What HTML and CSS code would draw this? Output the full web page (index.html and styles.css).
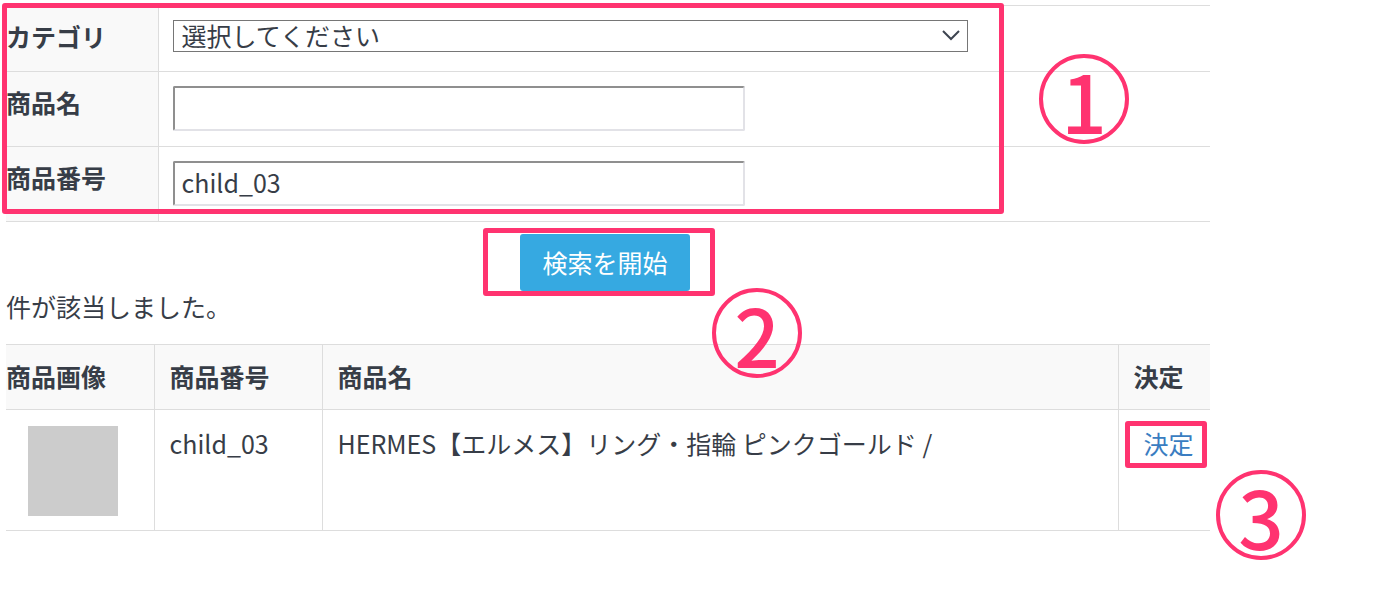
FILE: index.html
```html
<!DOCTYPE html>
<html lang="ja">

<head>
    <meta charset="UTF-8">
    <meta name="viewport" content="width=device-width, initial-scale=1.0">
    <title>商品検索</title>
    <link rel="stylesheet" href="styles.css">
</head>

<body>
    <div class="page">
        <!-- search form -->
        <table class="search-table">
            <colgroup>
                <col class="col-label">
                <col>
            </colgroup>
            <tr>
                <th>カテゴリ</th>
                <td>
                    <div class="select-wrap">
                        <select class="select">
                            <option>選択してください</option>
                        </select>
                        <svg class="select-arrow" width="18" height="11" viewBox="0 0 18 11">
                            <path d="M1 1 L9 9 L17 1" fill="none" stroke="#3d4450" stroke-width="2" />
                        </svg>
                    </div>
                </td>
            </tr>
            <tr>
                <th>商品名</th>
                <td><input class="text-input" type="text" value=""></td>
            </tr>
            <tr>
                <th>商品番号</th>
                <td><input class="text-input" type="text" value="child_03"></td>
            </tr>
        </table>

        <div class="btn-row">
            <button class="search-btn">検索を開始</button>
        </div>

        <p class="result-count">件が該当しました。</p>

        <!-- results -->
        <table class="result-table">
            <colgroup>
                <col class="col-img">
                <col class="col-code">
                <col>
                <col class="col-select">
            </colgroup>
            <tr>
                <th>商品画像</th>
                <th>商品番号</th>
                <th>商品名</th>
                <th>決定</th>
            </tr>
            <tr>
                <td class="img-cell"><div class="thumb"></div></td>
                <td>child_03</td>
                <td>HERMES【エルメス】リング・指輪 ピンクゴールド /</td>
                <td><a class="pick-link" href="#">決定</a></td>
            </tr>
        </table>

        <!-- annotations -->
        <div class="mark-box box-form"></div>
        <div class="mark-box box-btn"></div>
        <div class="mark-box box-link"></div>
        <div class="mark-num num-1">1</div>
        <div class="mark-num num-2">2</div>
        <div class="mark-num num-3">3</div>
    </div>
</body>

</html>
```

FILE: styles.css
```css
/* Basic body styling */
html,
body {
    min-height: 616px;
}

body {
    margin: 0;
    background-color: #fff;
    color: #373d47;
    font-family: "Noto Sans CJK JP", "Noto Sans", sans-serif;
    font-size: 25px;
}

.page {
    position: relative;
    width: 1204px;
    min-height: 611px;
    padding: 5px 0 0 6px;
}

table {
    width: 100%;
    border-collapse: collapse;
    table-layout: fixed;
}

/* Search form table */
.search-table .col-label {
    width: 152px;
}

.search-table th,
.search-table td {
    border-top: 1px solid #ddd;
    border-bottom: 1px solid #ddd;
    padding: 14px 14px 15px;
    vertical-align: top;
    line-height: 36px;
    text-align: left;
}

.search-table th {
    background-color: #f9f9f9;
    padding: 12px 0 17px;
    font-weight: bold;
    border-right: 1px solid #ddd;
}

.search-table td {
    padding-left: 14px;
}

.select-wrap {
    position: relative;
    width: 795px;
    height: 32px;
}

.select {
    appearance: none;
    -webkit-appearance: none;
    display: block;
    width: 795px;
    height: 32px;
    margin: 0;
    padding: 0 8px 1px;
    border: 1px solid #767676;
    border-radius: 0;
    background: #fff;
    color: #373d47;
    font-family: inherit;
    font-size: 25px;
    line-height: 29px;
}

.select-arrow {
    position: absolute;
    right: 8px;
    top: 10px;
}

.text-input {
    display: block;
    box-sizing: border-box;
    width: 572px;
    height: 45px;
    margin: 0;
    padding: 0 7px 3px;
    border: 2px solid;
    border-color: #8f8f8f #e2e2e7 #e2e2e7 #8f8f8f;
    border-radius: 2px;
    color: #373d47;
    font-family: inherit;
    font-size: 25px;
}

/* Search button */
.btn-row {
    text-align: center;
    padding: 12px 6px 0 0;
}

.search-btn {
    width: 170px;
    height: 57px;
    padding-bottom: 2px;
    border: none;
    border-radius: 3px;
    background-color: #36a9e1;
    color: #fff;
    font-family: inherit;
    font-size: 25px;
    cursor: pointer;
}

.result-count {
    margin: -3px 0 20px;
    line-height: 36px;
}

/* Results table */
.result-table .col-img {
    width: 148px;
}

.result-table .col-code {
    width: 168px;
}

.result-table .col-select {
    width: 92px;
}

.result-table th,
.result-table td {
    border-top: 1px solid #ddd;
    border-bottom: 1px solid #ddd;
    border-left: 1px solid #ddd;
    text-align: left;
    vertical-align: top;
}

.result-table th:first-child,
.result-table td:first-child {
    border-left: none;
}

.result-table th {
    background-color: #f9f9f9;
    font-weight: bold;
    padding: 15px 15px 17px;
    line-height: 32px;
}

.result-table th:first-child {
    padding-left: 0;
}

.result-table td {
    padding: 15px 15px 15px;
    line-height: 36px;
}

.result-table td.img-cell {
    padding: 16px 14px 14px 0;
}

.thumb {
    width: 90px;
    height: 90px;
    margin: 0 auto;
    background-color: #ccc;
}

.pick-link {
    padding-left: 10px;
    color: #3a7dc1;
    text-decoration: none;
}

/* Annotation marks */
.mark-box {
    position: absolute;
    border: 5px solid #ff3370;
    border-radius: 3px;
}

.box-form {
    left: 2px;
    top: 3px;
    width: 992px;
    height: 201px;
}

.box-btn {
    left: 483px;
    top: 228px;
    width: 222px;
    height: 58px;
}

.box-link {
    left: 1125px;
    top: 421px;
    width: 72px;
    height: 37px;
}

.mark-num {
    position: absolute;
    width: 82px;
    height: 82px;
    border: 4px solid #ff3370;
    border-radius: 50%;
    color: #ff3370;
    font-family: "Noto Sans CJK JP", sans-serif;
    font-size: 80px;
    font-weight: 500;
    line-height: 82px;
    text-align: center;
}

.num-1 {
    left: 1039px;
    top: 54px;
}

.num-2 {
    left: 712px;
    top: 288px;
}

.num-3 {
    left: 1216px;
    top: 470px;
}
```
